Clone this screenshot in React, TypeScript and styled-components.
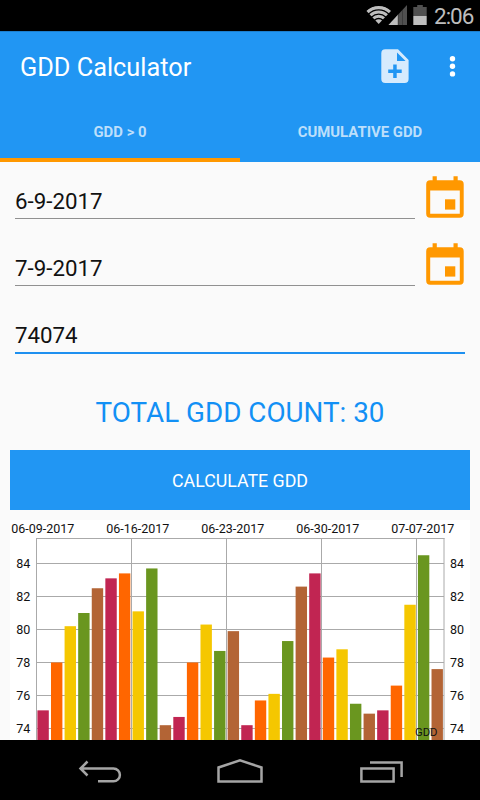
import React from "react";
import styled, { createGlobalStyle } from "styled-components";

const GlobalStyle = createGlobalStyle`
  * { box-sizing: border-box; }
  html, body { margin: 0; padding: 0; background: #000; }
  body { font-family: Roboto, sans-serif; }
`;

const Screen = styled.div`
  width: 480px;
  height: 800px;
  display: flex;
  flex-direction: column;
  overflow: hidden;
  background: #fafafa;
`;

const StatusBar = styled.div`
  flex: none;
  height: 31px;
  background: #000;
  display: flex;
  justify-content: flex-end;
`;

const StatusIcons = styled.svg`
  display: block;
  flex: none;
`;

const Clock = styled.span`
  width: 47px;
  flex: none;
  color: #bebebe;
  font-size: 22.5px;
  line-height: 33px;
  letter-spacing: -1px;
  white-space: nowrap;
  padding-left: 1px;
`;

const AppBar = styled.header`
  flex: none;
  height: 72px;
  background: #2196f3;
  border-top: 1px solid #1c7fce;
  display: flex;
  align-items: flex-start;
  padding: 0 20px;
`;

const Title = styled.h1`
  flex: 1;
  margin: 0;
  color: #fff;
  font-size: 25.3px;
  font-weight: 400;
  line-height: 71px;
`;

const BarIcon = styled.svg`
  display: block;
  flex: none;
  margin-top: 14px;
`;

const Tabs = styled.nav`
  flex: none;
  height: 59px;
  display: grid;
  grid-template-columns: 1fr 1fr;
  background: #2196f3;
`;

const Tab = styled.div<{ $active?: boolean }>`
  border-bottom: 4px solid ${(p) => (p.$active ? "#ff9800" : "#2196f3")};
  color: #bcdffb;
  font-size: 14.9px;
  font-weight: 700;
  line-height: 59px;
  height: 59px;
  text-align: center;
`;

const Content = styled.main`
  flex: 1;
  min-height: 0;
  overflow: hidden;
  display: flex;
  flex-direction: column;
`;

const Field = styled.div`
  flex: none;
  height: 67px;
  padding: 0 15px;
  display: flex;
`;

const Input = styled.div<{ $focused?: boolean }>`
  flex: 1;
  height: ${(p) => (p.$focused ? 58 : 57)}px;
  border-bottom: ${(p) => (p.$focused ? "2px solid #1e90f0" : "1px solid #909090")};
  color: #111;
  font-size: 22.3px;
  line-height: 78px;
`;

const Calendar = styled.svg`
  display: block;
  flex: none;
  margin: 13px 0 0 10px;
`;

const Total = styled.div`
  flex: none;
  height: 86px;
  color: #1290f5;
  font-size: 27.8px;
  line-height: 99px;
  text-align: center;
`;

const Button = styled.div`
  flex: none;
  height: 60px;
  margin: 0.5px 10px 10.5px;
  background: #2196f3;
  color: #fff;
  font-size: 17.8px;
  line-height: 62px;
  text-align: center;
`;

const ChartBox = styled.svg`
  display: block;
  flex: none;
  margin-left: 10px;
  background: #fff;
  font-family: Roboto, sans-serif;
  font-size: 12.5px;
`;

const NavBar = styled.footer`
  flex: none;
  height: 60px;
  background: #000;
  display: flex;
  justify-content: space-between;
  padding: 0 30px;
`;

const NavIcon = styled.svg`
  display: block;
  fill: none;
  stroke: #a5a5a5;
  stroke-width: 2.5;
`;

const CalendarIcon = () => (
  <Calendar width="40" height="46" viewBox="0 0 40 46" fill="#ff9800">
    <path
      fillRule="evenodd"
      d="M7.600 1.200h4.200v4h16.700v-4h4.200v4h2q4 0 4 4v29.600q0 4-4 4H5.200q-4 0-4-4V9.200q0-4 4-4h2.400zM5.200 15.500v23.200h29.600V15.500z"
    />
    <path d="M20 24.300h10.300v10.300H20z" />
  </Calendar>
);

const COLORS = ["#c12552", "#ff6600", "#f5c700", "#6a961f", "#b36435"];
const VALUES = [
  75.1, 78, 80.2, 81, 82.5, 83.1, 83.4, 81.1, 83.7, 74.2, 74.7, 78, 80.3, 78.7, 79.9,
  74.2, 75.7, 76.1, 79.3, 82.6, 83.4, 78.3, 78.8, 75.5, 74.9, 75.1, 76.6, 81.5, 84.5, 77.6,
];
const DATES = ["06-09-2017", "06-16-2017", "06-23-2017", "06-30-2017", "07-07-2017"];
const TICKS = [84, 82, 80, 78, 76, 74];

const yOf = (v: number) => 43.5 + (84 - v) * 16.5;

const Chart = () => (
  <ChartBox width="460" height="221" viewBox="0 0 460 221">
    <g stroke="#aaa" strokeWidth="1">
      <path d="M26 18.5H434.5M434 18V221" fill="none" />
      {TICKS.map((t) => (
        <line key={t} x1="26" x2="434" y1={yOf(t)} y2={yOf(t)} />
      ))}
      {DATES.map((d, i) => (
        <line key={d} x1={26.5 + i * 95} x2={26.5 + i * 95} y1="18" y2="221" />
      ))}
    </g>
    {VALUES.map((v, i) => (
      <rect
        key={i}
        x={27.4 + i * 13.59}
        y={yOf(v)}
        width="11.4"
        height={221 - yOf(v)}
        fill={COLORS[i % 5]}
      />
    ))}
    <g fill="#111">
      {DATES.map((d, i) => (
        <text key={d} x={32.8 + i * 95} y="12.8" textAnchor="middle">
          {d}
        </text>
      ))}
      {TICKS.map((t) => (
        <React.Fragment key={t}>
          <text x="20.3" y={yOf(t) + 4} textAnchor="end">
            {t}
          </text>
          <text x="440" y={yOf(t) + 4}>
            {t}
          </text>
        </React.Fragment>
      ))}
      <text x="427.5" y="216.3" textAnchor="end" fontSize="11.3">
        GDD
      </text>
    </g>
  </ChartBox>
);

export default function App() {
  return (
    <>
      <GlobalStyle />
      <Screen>
        <StatusBar>
          <StatusIcons width="68" height="31" viewBox="365 0 68 31">
            <clipPath id="wifi">
              <path d="M378.7 24L366 10.5Q378.7 0.5 391.4 10.5Z" />
            </clipPath>
            <g clipPath="url(#wifi)" fill="none" stroke="#bebebe" strokeWidth="3.1">
              <circle cx="378.7" cy="24" r="16.4" />
              <circle cx="378.7" cy="24" r="12" />
              <circle cx="378.7" cy="24" r="7.8" />
              <circle cx="378.7" cy="24" r="2.4" strokeWidth="4.8" />
            </g>
            <path d="M407 5V25H388.5Z" fill="#505050" />
            <path d="M398 14.8V25H388.5Z" fill="#bebebe" />
            <path d="M398.2 14V25M402.5 10V25" stroke="#333" strokeWidth="0.7" />
            <path d="M413.3 7h3.9V5h5.6v2h3.9v9h-13.4z" fill="#505050" />
            <path d="M413.3 16h13.4v9h-13.4z" fill="#bebebe" />
          </StatusIcons>
          <Clock>2:06</Clock>
        </StatusBar>
        <AppBar>
          <Title>GDD Calculator</Title>
          <BarIcon width="79" height="40" viewBox="381 46 79 40">
            <path
              fillRule="evenodd"
              fill="#d6ebfd"
              d="M385 49.3h13L408.6 60v19q0 4-4 4H385.3q-4 0-4-4V53.3q0-4 4-4zM397 52.4v8.6h8.6zM393.2 64.500v5h-5v3.400h5v5h3.500v-5h5v-3.400h-5v-5z"
            />
            <g fill="#fff">
              <circle cx="452.5" cy="58.7" r="2.7" />
              <circle cx="452.5" cy="66.3" r="2.7" />
              <circle cx="452.5" cy="73.9" r="2.7" />
            </g>
          </BarIcon>
        </AppBar>
        <Tabs>
          <Tab $active>GDD &gt; 0</Tab>
          <Tab>CUMULATIVE GDD</Tab>
        </Tabs>
        <Content>
          <Field>
            <Input>6-9-2017</Input>
            <CalendarIcon />
          </Field>
          <Field>
            <Input>7-9-2017</Input>
            <CalendarIcon />
          </Field>
          <Field>
            <Input $focused>74074</Input>
          </Field>
          <Total>TOTAL GDD COUNT: 30</Total>
          <Button>CALCULATE GDD</Button>
          <Chart />
        </Content>
        <NavBar>
          <NavIcon width="140" height="60" viewBox="30 740 140 60">
            <path d="M87.5 761.5L80.500 768.500L87.500 775.500M81 768.500H113.500A6.400 6.400 0 0 1 113.500 781.300H98" />
          </NavIcon>
          <NavIcon width="140" height="60" viewBox="170 740 140 60">
            <path d="M218.500 781.500V767.500L240 760.300L261.500 767.500V781.500Z" />
          </NavIcon>
          <NavIcon width="140" height="60" viewBox="310 740 140 60">
            <path d="M361.400 768.400H393.600V781.500H361.400ZM370 762.400H401.600V777" />
          </NavIcon>
        </NavBar>
      </Screen>
    </>
  );
}
